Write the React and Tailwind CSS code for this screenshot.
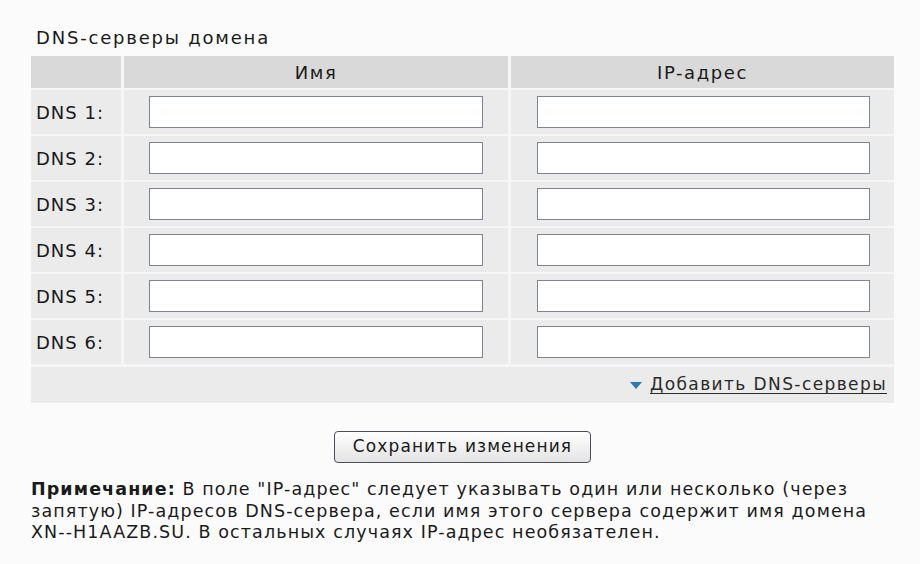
import React from "react";

const rows = [1, 2, 3, 4, 5, 6];

const Field = () => (
  <input
    type="text"
    className="h-[32px] w-full border border-[#7d8591] bg-white outline-none"
  />
);

export default function App() {
  return (
    <div
      className="min-h-[564px] w-[920px] bg-[#fbfbfb] px-[31px] pt-[25px] text-[#1a1a1a]"
      style={{ fontFamily: '"DejaVu Sans", Verdana, sans-serif' }}
    >
      <h2 className="ml-[5px] text-[18px] leading-[26px] tracking-[1.8px]">DNS-серверы домена</h2>

      <div className="mt-[5px] grid w-[863px] grid-cols-[90px_384px_383px] gap-x-[3px] gap-y-[2px] bg-[#f6f6f6]">
        <div className="h-[32px] bg-[#d9d9d9]" />
        <div className="flex h-[32px] items-center justify-center bg-[#d9d9d9] text-[18px] tracking-[1.6px]">Имя</div>
        <div className="flex h-[32px] items-center justify-center bg-[#d9d9d9] text-[18px] tracking-[1.6px]">IP-адрес</div>

        {rows.map((n) => (
          <React.Fragment key={n}>
            <div className="flex h-[44px] items-center bg-[#ebebeb] pl-[5px] text-[18px] tracking-[1px]">DNS {n}:</div>
            <div className="flex h-[44px] items-center bg-[#ebebeb] pl-[25px] pr-[25px]">
              <Field />
            </div>
            <div className="flex h-[44px] items-center bg-[#ebebeb] pl-[26px] pr-[24px]">
              <Field />
            </div>
          </React.Fragment>
        ))}

        <div className="col-span-3 mt-[1px] flex h-[36px] items-center justify-end bg-[#ebebeb] pr-[7px] text-[17px] tracking-[1.4px]">
          <svg width="12" height="8" viewBox="0 0 12 8" className="mr-[8px] mt-[2px]">
            <path d="M0 0 L12 0 L6 7 Z" fill="#2f78b0" />
          </svg>
          <a href="#" className="text-[#2a2a2a] underline underline-offset-[3px]">
            Добавить DNS-серверы
          </a>
        </div>
      </div>

      <div className="mt-[28px] flex w-[863px] justify-center">
        <button className="h-[32px] w-[257px] rounded-[4px] border border-[#4a4f57] bg-gradient-to-b from-white to-[#e3e3e3] text-[17px] tracking-[1.1px] text-[#1a1a1a]">
          Сохранить изменения
        </button>
      </div>

      <p className="mt-[16px] w-[889px] whitespace-nowrap text-[17.5px] leading-[21.5px] tracking-[1.1px]">
        <span className="font-bold">Примечание:</span> В поле "IP-адрес" следует указывать один или несколько (через
        <br />
        запятую) IP-адресов DNS-сервера, если имя этого сервера содержит имя домена
        <br />
        XN--H1AAZB.SU. В остальных случаях IP-адрес необязателен.
      </p>
    </div>
  );
}
